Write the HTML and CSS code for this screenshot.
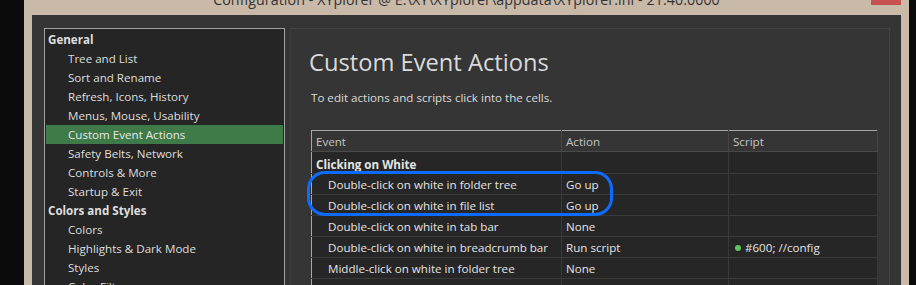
FILE: index.html
```html
<!DOCTYPE html>
<html>
<head>
<meta charset="utf-8">
<link rel="stylesheet" href="styles.css">
</head>
<body>
<div class="screen">
  <div class="edge"></div>
  <div class="window">
    <div class="titlebar">
      <div class="title">Configuration - XYplorer @ E:\XY\XYplorer\appdata\XYplorer.ini - 21.40.0000</div>
      <div class="close"></div>
    </div>
    <div class="client">
      <nav class="tree">
        <div class="node head">General</div>
        <div class="node">Tree and List</div>
        <div class="node">Sort and Rename</div>
        <div class="node">Refresh, Icons, History</div>
        <div class="node">Menus, Mouse, Usability</div>
        <div class="node selected">Custom Event Actions</div>
        <div class="node">Safety Belts, Network</div>
        <div class="node">Controls &amp; More</div>
        <div class="node">Startup &amp; Exit</div>
        <div class="node head">Colors and Styles</div>
        <div class="node">Colors</div>
        <div class="node">Highlights &amp; Dark Mode</div>
        <div class="node">Styles</div>
        <div class="node">Color Filters</div>
      </nav>
      <section class="page">
        <h1 class="heading">Custom Event Actions</h1>
        <p class="hint">To edit actions and scripts click into the cells.</p>
        <div class="grid-wrap">
          <table class="grid">
            <colgroup>
              <col class="c-event"><col class="c-action"><col class="c-script">
            </colgroup>
            <thead>
              <tr><th>Event</th><th>Action</th><th>Script</th></tr>
            </thead>
            <tbody>
              <tr class="group"><td class="strong">Clicking on White</td><td></td><td></td></tr>
              <tr><td class="ind">Double-click on white in folder tree</td><td>Go up</td><td></td></tr>
              <tr><td class="ind">Double-click on white in file list</td><td>Go up</td><td></td></tr>
              <tr><td class="ind">Double-click on white in tab bar</td><td>None</td><td></td></tr>
              <tr><td class="ind">Double-click on white in breadcrumb bar</td><td>Run script</td><td><span class="dot"></span>#600; //config</td></tr>
              <tr><td class="ind">Middle-click on white in folder tree</td><td>None</td><td></td></tr>
              <tr><td class="ind">Middle-click on white in file list</td><td>None</td><td></td></tr>
            </tbody>
          </table>
          <div class="ring"></div>
        </div>
      </section>
    </div>
  </div>
  <div class="edge right"></div>
</div>
</body>
</html>
```
FILE: styles.css
```css
html, body {
  margin: 0;
  padding: 0;
  background: #0b0b0b;
}

.screen {
  display: flex;
  width: 916px;
  height: 285px;
  overflow: hidden;
  font-family: "Open Sans", "Noto Sans", sans-serif;
}

.edge {
  width: 24px;
  flex: none;
  background: #0b0b0b;
}

.edge.right {
  width: 7px;
}

.window {
  width: 885px;
  flex: none;
  box-sizing: border-box;
  padding: 0 8px;
  background: #c8b9a8;
  display: flex;
  flex-direction: column;
}

.titlebar {
  height: 15px;
  flex: none;
  position: relative;
  overflow: hidden;
}

.title {
  margin-top: -8px;
  text-align: center;
  font-size: 14.2px;
  letter-spacing: 0.1px;
  line-height: 15px;
  color: #333333;
  white-space: nowrap;
}

.close {
  position: absolute;
  top: 0;
  right: -1px;
  width: 31px;
  height: 5px;
  background: #c75050;
}

.client {
  flex: 1;
  background: #353535;
  display: flex;
  align-items: flex-start;
  gap: 5px;
  padding: 13px 11px 0 12px;
}

.tree {
  width: 241px;
  height: 300px;
  flex: none;
  box-sizing: border-box;
  border: 1px solid #a3a3a3;
  background: #252525;
  padding: 1px 1px 0;
}

.node {
  height: 19px;
  line-height: 19px;
  font-size: 11.6px;
  color: #dedede;
  padding-left: 22px;
  white-space: nowrap;
}

.node.head {
  padding-left: 2px;
  font-weight: 700;
}

.node.selected {
  background: #3e7b49;
  color: #e8e8e8;
}

.page {
  width: 600px;
  height: 300px;
  flex: none;
  box-sizing: border-box;
  border-top: 1px solid #444444;
  border-left: 1px solid #3b3b3b;
  border-right: 1px solid #444444;
  padding: 17px 11px 0 18px;
}

.heading {
  margin: 0;
  font-size: 23.7px;
  line-height: 32px;
  font-weight: 400;
  color: #dadada;
  white-space: nowrap;
}

.hint {
  margin: 12px 0 0 2px;
  font-size: 11.6px;
  line-height: 16px;
  color: #dcdcdc;
}

.grid-wrap {
  position: relative;
  margin: 24px 0 0 2px;
}

.grid {
  width: 567px;
  border-collapse: collapse;
  border: 1px solid #a6a6a6;
  table-layout: fixed;
  font-size: 11.6px;
  color: #e4e4e4;
}

.c-event { width: 250px; }
.c-action { width: 167px; }

.grid th {
  height: 20px;
  padding: 0 4px;
  background: #353535;
  color: #c4c4c4;
  font-weight: 400;
  text-align: left;
  border-right: 1px solid #454545;
  border-bottom: 1px solid #4a4a4a;
  white-space: nowrap;
}

.grid td {
  height: 20px;
  padding: 0 4px;
  background: #262626;
  border-right: 1px solid #3a3a3a;
  border-bottom: 1px solid #3a3a3a;
  white-space: nowrap;
  overflow: hidden;
}

.grid tr.group td {
  height: 20px;
  vertical-align: bottom;
  padding-bottom: 1px;
}

.grid td.strong {
  font-weight: 700;
}

.grid td.ind {
  padding-left: 16px;
}

.dot {
  display: inline-block;
  width: 6px;
  height: 6px;
  border-radius: 50%;
  background: #5cc45c;
  margin: 0 4px 1px 2px;
  vertical-align: middle;
}

.ring {
  position: absolute;
  left: -4px;
  top: 41px;
  width: 306px;
  height: 45px;
  box-sizing: border-box;
  border: 3px solid #0b6cff;
  border-radius: 18px;
}
```
